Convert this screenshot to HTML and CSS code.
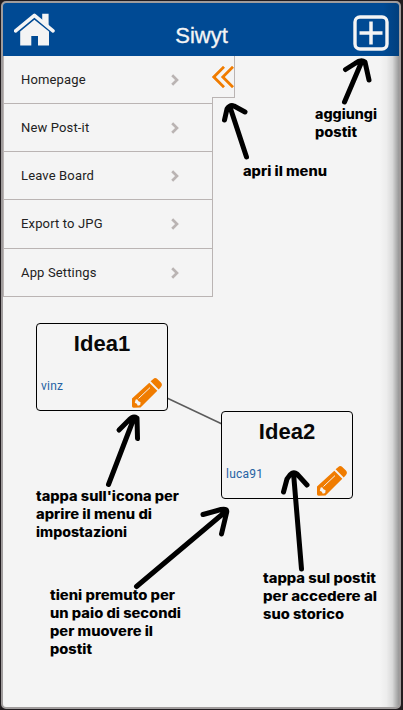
FILE: index.html
```html
<!DOCTYPE html>
<html lang="it">
<head>
<meta charset="utf-8">
<title>Siwyt</title>
<link rel="stylesheet" href="styles.css">
</head>
<body>
<svg class="symbols" aria-hidden="true">
  <symbol id="chevron" viewBox="0 0 8 12"><path d="M1.2 1.2 6 6 1.2 10.8" fill="none" stroke="#bab4b3" stroke-width="2.7"/></symbol>
  <symbol id="pencil" viewBox="0 0 30 30">
    <path fill="#f07c00" d="M0 20.5 17.3 4.7 25.3 12.8 8.5 29.4 1.5 29.7Q0 29.7 0 28.300ZM18.600 3.300 21.300 1Q23.200-.8 25.300 1L28.700 4.300Q31 6.600 29 9L26.700 11.400Z"/>
    <path d="M6.500 20.500 18 9.600" stroke="#f4f4f4" stroke-width="1"/>
    <path fill="#f4f4f4" d="M3.700 21.500 5.200 21.200 6.500 23.200 8.600 24.200 8.200 27 5.800 27.700 4.800 25.700 2.800 24.700Z"/>
  </symbol>
</svg>
<div class="screen">
  <header class="header">
    <svg class="home" width="41" height="33" viewBox="14 12.5 41 33">
      <path d="M15.600 30.400 34.400 14.900 53 30.400" fill="none" stroke="#f4f4f4" stroke-width="3.600" stroke-linecap="round" stroke-linejoin="round"/>
      <path d="M42.200 13.300H48.600V25L42.200 20Z" fill="#f4f4f4"/>
      <path d="M20.200 45V31L34.400 19.200 49 31V45H38V35.500H31.300V45Z" fill="#f4f4f4"/>
    </svg>
    <h1 class="title">Siwyt</h1>
    <svg class="add" width="36" height="36" viewBox="0 0 36 36" fill="none" stroke="#f4f4f4">
      <rect x="2" y="2" width="32" height="32" rx="5" stroke-width="3.400"/>
      <path d="M6.500 18H29.500M18 6.500V29.500" stroke-width="3.500"/>
    </svg>
  </header>
  <div class="drawer">
    <nav class="menu">
      <a class="item"><span>Homepage</span><svg class="chevron"><use href="#chevron"/></svg></a>
      <a class="item"><span>New Post-it</span><svg class="chevron"><use href="#chevron"/></svg></a>
      <a class="item"><span>Leave Board</span><svg class="chevron"><use href="#chevron"/></svg></a>
      <a class="item tall"><span>Export to JPG</span><svg class="chevron"><use href="#chevron"/></svg></a>
      <a class="item"><span>App Settings</span><svg class="chevron"><use href="#chevron"/></svg></a>
    </nav>
    <div class="tab">
      <svg width="22" height="22" viewBox="0 0 22 22" fill="none" stroke="#f07c00" stroke-width="2.800"><path d="M12 .8 1.800 11 12 21.200M21 .8 10.800 11 21 21.200"/></svg>
    </div>
  </div>
</div>
<svg class="link" width="403" height="710"><path d="M167.500 398.300 222 424" stroke="#5b5b5b" stroke-width="1.500"/></svg>
<article class="postit first">
  <h2 class="idea">Idea1</h2>
  <span class="author">vinz</span>
  <svg class="pencil"><use href="#pencil"/></svg>
</article>
<article class="postit second">
  <h2 class="idea">Idea2</h2>
  <span class="author">luca91</span>
  <svg class="pencil"><use href="#pencil"/></svg>
</article>
<svg class="notes" width="403" height="710" viewBox="0 0 403 710">
  <g class="arrows">
    <path d="M344.500 102 362 61M345.500 69.500 355 63.500Q361 59 365 62L369 80"/>
    <path d="M246.500 157 230 107M224.500 120 227 109Q230 104.500 234 106L245 112"/>
    <path d="M108.500 484.500 134 418M119 430 129 420Q133 415.500 137 418L137.500 438.500"/>
    <path d="M136.500 586.500 225 512M203 514.500 221 509.500Q228 508 226.500 513L221.500 534"/>
    <path d="M301.500 569 293.500 473M283.500 492 287 479Q292 470 297 474L307 485"/>
  </g>
  <g class="text">
    <text x="315" y="119" textLength="62" lengthAdjust="spacingAndGlyphs">aggiungi</text>
    <text x="315" y="137" textLength="42" lengthAdjust="spacingAndGlyphs">postit</text>
    <text x="243" y="176" textLength="84" lengthAdjust="spacingAndGlyphs">apri il menu</text>
    <text x="36" y="501" textLength="143" lengthAdjust="spacingAndGlyphs">tappa sull'icona per</text>
    <text x="36" y="519" textLength="116" lengthAdjust="spacingAndGlyphs">aprire il menu di</text>
    <text x="36" y="537" textLength="91" lengthAdjust="spacingAndGlyphs">impostazioni</text>
    <text x="50" y="600" textLength="125" lengthAdjust="spacingAndGlyphs">tieni premuto per</text>
    <text x="50" y="618" textLength="131" lengthAdjust="spacingAndGlyphs">un paio di secondi</text>
    <text x="50" y="636" textLength="103" lengthAdjust="spacingAndGlyphs">per muovere il</text>
    <text x="50" y="654" textLength="42" lengthAdjust="spacingAndGlyphs">postit</text>
    <text x="263" y="583" textLength="113" lengthAdjust="spacingAndGlyphs">tappa sul postit</text>
    <text x="263" y="601" textLength="114" lengthAdjust="spacingAndGlyphs">per accedere al</text>
    <text x="263" y="619" textLength="81" lengthAdjust="spacingAndGlyphs">suo storico</text>
  </g>
</svg>
</body>
</html>
```
FILE: styles.css
```css
* { box-sizing: border-box; }
body {
  margin: 0;
  width: 403px;
  height: 710px;
  padding: 1px 2px 1px 1px;
  overflow: hidden;
  position: relative;
  background: #211c1f;
  font-family: Roboto, "Liberation Sans", sans-serif;
}
.symbols { position: absolute; width: 0; height: 0; }
.screen {
  height: 708px;
  border: 2px solid #a09c9c;
  border-radius: 5px;
  overflow: hidden;
  position: relative;
  background: #f4f4f4;
}
.screen::after {
  content: "";
  position: absolute;
  top: 53px;
  right: 0;
  bottom: 0;
  width: 19px;
  background: linear-gradient(90deg, rgba(0,0,0,0), rgba(0,0,0,.03) 35%, rgba(0,0,0,.11) 65%, rgba(0,0,0,.38));
}
.header {
  height: 53px;
  padding: 0 10px 0 11px;
  display: flex;
  justify-content: space-between;
  background: linear-gradient(90deg, #004a94 380px, #003f7d);
}
.home { margin-top: 9.5px; }
.title {
  margin: 20px 5px 0 0;
  font: 400 22px/26px "Liberation Sans", sans-serif;
  color: #f4f4f4;
  -webkit-text-stroke: .3px #f4f4f4;
}
.add { margin-top: 12px; }
.drawer { display: flex; align-items: flex-start; }
.menu {
  width: 210px;
  border: solid #bab4b3;
  border-width: 0 1px 0 1px;
}
.item {
  height: 48px;
  padding: 0 33px 0 17px;
  display: flex;
  align-items: center;
  justify-content: space-between;
  border-bottom: 1px solid #bab4b3;
  color: #222;
  font-size: 13px;
  letter-spacing: .15px;
}
.item.tall { height: 49px; padding-bottom: 1px; }
.chevron { width: 8px; height: 12px; }
.tab {
  width: 23px;
  height: 42px;
  margin-left: -1px;
  padding-top: 10px;
  border: solid #bab4b3;
  border-width: 0 1px 1px 0;
  background: #f4f4f4;
}
.tab svg { display: block; }
.link, .notes { position: absolute; left: 0; top: 0; }
.postit {
  position: absolute;
  width: 132px;
  height: 88px;
  border: 1px solid #000;
  border-radius: 4px;
  background: #f4f4f4;
}
.first { left: 36px; top: 323px; }
.second { left: 221px; top: 411px; }
.idea {
  margin: 7px 0 0;
  text-align: center;
  font: 700 22px/26px "Liberation Sans", sans-serif;
  color: #080808;
}
.author {
  display: block;
  margin: 21px 0 0 4px;
  font-size: 12px;
  line-height: 16px;
  letter-spacing: .25px;
  color: #2562a3;
}
.pencil { position: absolute; right: 5px; bottom: 2px; width: 30px; height: 30px; }
.arrows { fill: none; stroke: #000; stroke-width: 5; stroke-linecap: round; stroke-linejoin: round; }
.text { font: 800 13px Inter, sans-serif; fill: #000; }
```
